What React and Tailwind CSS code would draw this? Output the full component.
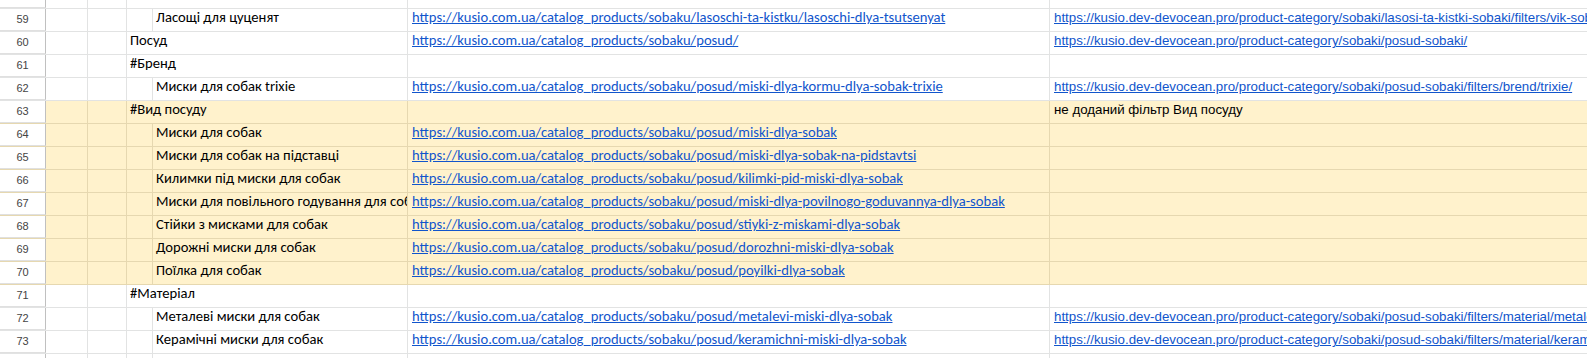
const E = "https://kusio.com.ua/catalog_products/sobaku/";
const F = "https://kusio.dev-devocean.pro/product-category/sobaki/";

const rows = [
  { n: 58, lvl: 1, text: "#Вік собаки" },
  { n: 59, lvl: 2, text: "Ласощі для цуценят", e: E + "lasoschi-ta-kistku/lasoschi-dlya-tsutsenyat", f: F + "lasosi-ta-kistki-sobaki/filters/vik-sobaki/cucenyata/" },
  { n: 60, lvl: 1, text: "Посуд", e: E + "posud/", f: F + "posud-sobaki/" },
  { n: 61, lvl: 1, text: "#Бренд" },
  { n: 62, lvl: 2, text: "Миски для собак trixie", e: E + "posud/miski-dlya-kormu-dlya-sobak-trixie", f: F + "posud-sobaki/filters/brend/trixie/" },
  { n: 63, lvl: 1, text: "#Вид посуду", note: "не доданий фільтр Вид посуду", y: true },
  { n: 64, lvl: 2, text: "Миски для собак", e: E + "posud/miski-dlya-sobak", y: true },
  { n: 65, lvl: 2, text: "Миски для собак на підставці", e: E + "posud/miski-dlya-sobak-na-pidstavtsi", y: true },
  { n: 66, lvl: 2, text: "Килимки під миски для собак", e: E + "posud/kilimki-pid-miski-dlya-sobak", y: true },
  { n: 67, lvl: 2, text: "Миски для повільного годування для собак", e: E + "posud/miski-dlya-povilnogo-goduvannya-dlya-sobak", y: true },
  { n: 68, lvl: 2, text: "Стійки з мисками для собак", e: E + "posud/stiyki-z-miskami-dlya-sobak", y: true },
  { n: 69, lvl: 2, text: "Дорожні миски для собак", e: E + "posud/dorozhni-miski-dlya-sobak", y: true },
  { n: 70, lvl: 2, text: "Поїлка для собак", e: E + "posud/poyilki-dlya-sobak", y: true },
  { n: 71, lvl: 1, text: "#Матеріал" },
  { n: 72, lvl: 2, text: "Металеві миски для собак", e: E + "posud/metalevi-miski-dlya-sobak", f: F + "posud-sobaki/filters/material/metalevi/" },
  { n: 73, lvl: 2, text: "Керамічні миски для собак", e: E + "posud/keramichni-miski-dlya-sobak", f: F + "posud-sobaki/filters/material/keramichni/" },
  { n: 74, lvl: 0 },
];

const cellText = "font-['Calibri','Lato',sans-serif] text-[14.6px] text-black";
const linkE = "font-['Calibri','Lato',sans-serif] text-[14.6px] text-[#1155cc] underline";
const linkF = "font-['Liberation_Sans',Arial,sans-serif] text-[13.3px] text-[#1155cc] underline";

function Row({ r }) {
  const line = r.y ? "border-[#e6d8b0]" : "border-[#e2e3e3]";
  const bg = r.y ? "bg-[#fff2cc]" : "bg-white";
  const cell = `h-full border-r ${line} overflow-hidden whitespace-nowrap flex items-end pb-[2px]`;
  return (
    <div className={`flex h-[23px] border-b ${line} ${bg}`}>
      <div className="w-[46px] shrink-0 h-full bg-white border-r border-[#c0c0c0] border-b border-b-[#e0e0e0] -mb-px flex items-center justify-center font-['Liberation_Sans',Arial,sans-serif] text-[11px] text-[#444]">
        {r.n}
      </div>
      <div className={`w-[42px] shrink-0 ${cell}`} />
      <div className={`w-[39px] shrink-0 ${cell}`} />
      {r.lvl === 1 ? (
        <div className={`w-[281px] shrink-0 ${cell} pl-[3px] ${cellText}`}>{r.text}</div>
      ) : (
        <>
          <div className={`w-[26px] shrink-0 ${cell}`} />
          <div className={`w-[255px] shrink-0 ${cell} pl-[3px] ${cellText}`}>{r.text}</div>
        </>
      )}
      <div className={`w-[642px] shrink-0 ${cell} pl-[4px]`}>
        {r.e && <span className={linkE}>{r.e}</span>}
      </div>
      <div className="flex-1 min-w-0 h-full overflow-hidden whitespace-nowrap flex items-end pb-[3px] pl-[4px]">
        {r.f && <span className={linkF}>{r.f}</span>}
        {r.note && (
          <span className="font-['Liberation_Sans',Arial,sans-serif] text-[13.3px] text-black">{r.note}</span>
        )}
      </div>
    </div>
  );
}

export default function App() {
  return (
    <div className="w-[1587px] h-[358px] overflow-hidden bg-white">
      <div className="-mt-[14px]">
        {rows.map((r) => (
          <Row key={r.n} r={r} />
        ))}
      </div>
    </div>
  );
}
